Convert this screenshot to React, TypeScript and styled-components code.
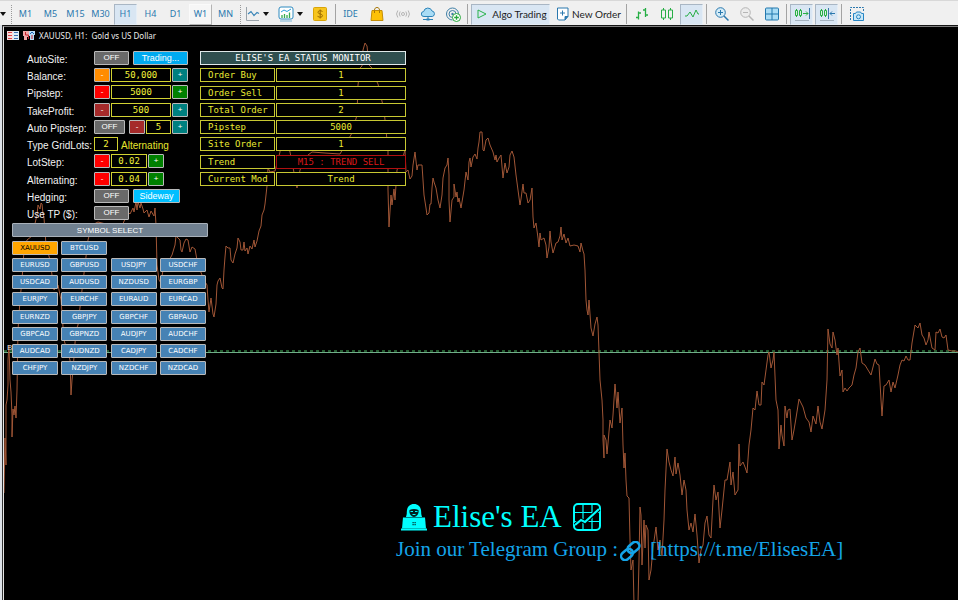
import React from "react";
import styled, { createGlobalStyle, css } from "styled-components";

const GlobalStyle = createGlobalStyle`
  *, *::before, *::after { box-sizing: border-box; }
  body {
    margin: 0;
    background: #000;
    font-family: "Liberation Sans", Arial, sans-serif;
  }
  button, input { font: inherit; margin: 0; padding: 0; }
`;

const ui = `"Noto Sans", "Open Sans", sans-serif`;
const mono = `"DejaVu Sans Mono", "Liberation Mono", monospace`;
const serif = `"Liberation Serif", "Times New Roman", serif`;

const Page = styled.div`
  display: flex;
  flex-direction: column;
  min-height: 100vh;
`;

/* ---------- toolbar ---------- */

const Toolbar = styled.header`
  display: flex;
  align-items: center;
  height: 25px;
  padding-top: 2px;
  background: #f0f0f0;
  border-top: 1px solid #d8d8d8;
  overflow: hidden;
  flex: none;
`;

const Frames = styled.nav`
  display: flex;
  gap: 2px;
  padding-left: 2px;
`;

const ToolButton = styled.button<{ $on?: boolean; $raised?: boolean; $width?: number }>`
  display: flex;
  align-items: center;
  justify-content: center;
  gap: 3px;
  flex: none;
  width: ${(p) => p.$width ?? 23}px;
  height: 21px;
  border: 1px solid transparent;
  background: transparent;
  color: #2a78ae;
  font: 9px/20px ${ui};
  white-space: nowrap;
  ${(p) =>
    p.$on &&
    css`
      background: #d9e6f3;
      border-color: #a9b6c4 #e6eef6 #e6eef6 #a9b6c4;
    `}
  ${(p) =>
    p.$raised &&
    css`
      background: #f6f6f6;
      border-color: #fafafa #b4b4b4 #b4b4b4 #fafafa;
    `}
`;

const CommandButton = styled(ToolButton)`
  color: #1c1c1c;
  font: 10px/20px Lato, ${ui};
`;

const Grip = styled.span<{ $before: number }>`
  flex: none;
  width: 1px;
  height: 19px;
  margin-left: ${(p) => p.$before}px;
  border-left: 1px dotted #9a9a9a;
`;

const Divider = styled.span`
  flex: none;
  width: 1px;
  height: 20px;
  margin: 0 3px;
  background: #a3a3a3;
`;

const Tools = styled.div<{ $gap?: number }>`
  display: flex;
  gap: ${(p) => p.$gap ?? 2}px;
`;

const Caret = styled.span`
  flex: none;
  width: 0;
  height: 0;
  border: 3px solid transparent;
  border-top: 4px solid #111;
  border-bottom: 0;
`;

/* ---------- chart window ---------- */

const Workspace = styled.main`
  display: flex;
  flex: 1;
  padding-left: 2px;
  background: #dde2e8;
`;

const ChartWindow = styled.section`
  flex: 1;
  display: flex;
  border-top: 1px solid #151515;
  border-left: 1px solid #333;
`;

const ChartArea = styled.div`
  position: relative;
  isolation: isolate;
  flex: 1;
  display: flex;
  flex-direction: column;
  min-width: 0;
  background: #000;
  border-top: 1px solid #7d7d7d;
  border-left: 1px solid #e4e4e4;
`;

const Plot = styled.svg`
  position: absolute;
  inset: 0;
  z-index: -1;
  width: 100%;
  height: 100%;
`;

const ChartTitle = styled.h1`
  display: flex;
  align-items: center;
  gap: 4px;
  height: 17px;
  margin: 0;
  padding-left: 3px;
  color: #ececec;
  font: 8px/17px ${ui};
  white-space: pre;
`;

const Panels = styled.div`
  display: flex;
  gap: 12px;
  padding: 7px 0 0 23px;
`;

const Controls = styled.form`
  display: flex;
  flex-direction: column;
  justify-content: space-between;
  width: 161px;
  height: 169px;
`;

const ControlRow = styled.div`
  display: flex;
  height: 14px;
`;

const RowLabel = styled.label`
  flex: none;
  width: 67px;
  color: #f2f2f2;
  font-size: 10px;
  line-height: 17px;
  white-space: nowrap;
`;

const RowFields = styled.div<{ $gap: number }>`
  display: flex;
  gap: ${(p) => p.$gap}px;
`;

const PushButton = styled.button<{ $bg: string; $width: number; $size?: number }>`
  flex: none;
  width: ${(p) => p.$width}px;
  height: 14px;
  border: 1px solid #b9b9b9;
  border-radius: 1px;
  background: ${(p) => p.$bg};
  color: #fff;
  font-size: ${(p) => p.$size ?? 8}px;
  line-height: 12px;
  text-align: center;
`;

const NumberBox = styled.input<{ $width: number }>`
  flex: none;
  width: ${(p) => p.$width}px;
  height: 14px;
  border: 1px solid #d2d232;
  border-radius: 0;
  background: #000;
  color: #f4f43a;
  text-align: center;
  && { font: 9px/12px ${mono}; }
`;

const ModeName = styled.output`
  padding-left: 2px;
  color: #e6e62e;
  font-size: 10px;
  line-height: 17px;
`;

const StatusTable = styled.table`
  display: flex;
  flex-direction: column;
  justify-content: space-between;
  width: 206px;
  height: 135px;
  font: 9px/12px ${mono};

  caption {
    height: 14px;
    border: 1px solid #dfe9e9;
    background: #2f4f4f;
    color: #fff;
  }
  tbody { display: contents; }
`;

const StatusRow = styled.tr`
  display: grid;
  grid-template-columns: 75px 1fr;
  gap: 1px;
  height: 14px;
  color: #eaea33;
`;

const StatusName = styled.th`
  padding: 0 0 0 7px;
  border: 1px solid #c8c832;
  background: #000;
  font-weight: 400;
  text-align: left;
  white-space: nowrap;
`;

const StatusValue = styled.td<{ $alert?: boolean }>`
  padding: 0;
  border: 1px solid ${(p) => (p.$alert ? "#b01010" : "#c8c832")};
  background: #000;
  color: ${(p) => (p.$alert ? "#d81818" : "inherit")};
  text-align: center;
`;

const Symbols = styled.section`
  width: 196px;
  margin: 3px 0 0 8px;
`;

const SymbolsTitle = styled.h2`
  height: 14px;
  margin: 0 0 4px;
  border: 1px solid #a9b1ba;
  border-radius: 1px;
  background: #708090;
  color: #fff;
  font-size: 8px;
  font-weight: 400;
  line-height: 13px;
  text-align: center;
`;

const SymbolRows = styled.div`
  display: flex;
  flex-direction: column;
  justify-content: space-between;
  height: 134px;
`;

const SymbolRow = styled.div`
  display: grid;
  grid-template-columns: repeat(4, 46px);
  justify-content: space-between;
  width: 194px;
`;

const SymbolButton = styled.button<{ $active?: boolean }>`
  height: 14px;
  border: 1px solid #b9b9b9;
  border-radius: 1px;
  background: ${(p) => (p.$active ? "#ffa500" : "#4682b4")};
  color: ${(p) => (p.$active ? "#000" : "#fff")};
  text-align: center;
  && { font: 7px/12px "DejaVu Sans", sans-serif; }
`;

const Banner = styled.footer`
  margin-top: auto;
  padding: 0 0 35px 392px;
  font-family: ${serif};
  white-space: nowrap;
`;

const BannerTitle = styled.h2`
  display: flex;
  align-items: center;
  gap: 5px;
  height: 34px;
  margin: 0;
  padding-left: 4px;
  color: #00ffff;
  font-size: 31px;
  font-weight: 400;
  line-height: 34px;

  svg:last-child { margin-left: 5px; }
`;

const BannerLine = styled.p`
  display: flex;
  align-items: center;
  height: 31px;
  margin: 0;
  color: #14a4e8;
  font-size: 21px;
  line-height: 31px;

  svg { margin: 2px 9px 0 2px; }
  a { color: inherit; text-decoration: none; }
`;

/* ---------- icons ---------- */

const Icon = ({ w = 16, h = 16, children }: { w?: number; h?: number; children: React.ReactNode }) => (
  <svg width={w} height={h} viewBox={`0 0 ${w} ${h}`} fill="none" aria-hidden="true">
    {children}
  </svg>
);

const LineChartIcon = () => (
  <Icon w={15}>
    <path d="M1.5 1v13.5H14" stroke="#9aa3aa" />
    <path d="M3 8l3-2.500 3 4 3-3 2 1" stroke="#3b86b8" strokeWidth="1.200" />
  </Icon>
);
const IndicatorIcon = () => (
  <Icon>
    <rect x="1" y="1" width="14" height="12" rx="2" fill="#fff" stroke="#2e8bc0" />
    <path d="M2 15h12" stroke="#7ab3d6" />
    <path d="M3 6l3-2 3 1.500 4-2.500" stroke="#2a9fd8" />
    <path d="M4 12V9M6.500 12V8M9 12V9M11.500 12V6.500" stroke="#35ab4e" strokeWidth="1.300" />
  </Icon>
);
const DollarIcon = () => (
  <Icon>
    <rect x="1.500" y="1.500" width="13" height="13" rx="1" fill="#f7c51e" stroke="#d9a407" />
    <path d="M10.500 5.500C8.500 4 6 4.700 6 6.300c0 2.200 4.500 1.200 4.500 3.400 0 1.800-3 2-5 .6M8.200 3.500v9" stroke="#9c6c00" />
  </Icon>
);
const BagIcon = () => (
  <Icon>
    <path d="M5.500 6V4.200C5.500 2.500 6.500 1.500 8 1.500s2.500 1 2.500 2.700V6" stroke="#a87808" />
    <path d="M3 4.500h10l1 10H2z" fill="#fdc106" stroke="#c48e07" />
    <path d="M5.500 7V4.500M10.500 7V4.500" stroke="#a87808" />
  </Icon>
);
const SignalIcon = () => (
  <Icon>
    <circle cx="8" cy="8" r="1.500" stroke="#b5b5b5" />
    <path d="M5.200 5.500a4 4 0 000 5M10.800 5.500a4 4 0 010 5M2.800 4.500a6 6 0 000 7M13.200 4.500a6 6 0 010 7" stroke="#b5b5b5" />
  </Icon>
);
const CloudIcon = () => (
  <Icon>
    <path d="M4 10.500a2.500 2.500 0 01-.3-5A4.300 4.300 0 0112 5a2.800 2.800 0 01.3 5.500z" fill="#a9dcf5" stroke="#2c83b8" />
    <path d="M8 10.500v3M3 13.500h10" stroke="#2c83b8" />
    <path d="M6.500 13.500h3" stroke="#2c83b8" strokeWidth="2" />
  </Icon>
);
const TargetIcon = () => (
  <Icon>
    <path d="M13.500 8A6 6 0 107.500 14M11 8a3.500 3.500 0 10-3.500 3.500" stroke="#3f7fa6" />
    <circle cx="7.500" cy="8" r="1.200" fill="#3f7fa6" />
    <circle cx="11.500" cy="11.500" r="4" fill="#fff" stroke="#24a83a" />
    <path d="M11.500 9.200v4.600M9.200 11.500h4.600" stroke="#24a83a" strokeWidth="1.300" />
  </Icon>
);
const PlayIcon = () => (
  <Icon w={15}>
    <path d="M4 4l8 4-8 4z" stroke="#27b34a" />
  </Icon>
);
const NewOrderIcon = () => (
  <Icon w={13}>
    <path d="M2 2h10v8.500L9 14H2.500L1.500 13V2z" fill="#fff" stroke="#2a78ae" />
    <path d="M12 10.500H9V14" fill="#2a78ae" stroke="#2a78ae" />
    <path d="M6.500 4.500v5M4 7h5" stroke="#2a78ae" />
  </Icon>
);
const BarsIcon = () => (
  <Icon>
    <path d="M4.500 5.500v8M2 11.500h2.500M4.500 7H7M11.500 2v9M9 4h2.500M11.500 9H14" stroke="#27ae45" strokeWidth="1.300" />
  </Icon>
);
const CandlesIcon = () => (
  <Icon>
    <path d="M4.500 2v12M11.500 2v12" stroke="#27ae45" />
    <path d="M2.500 4h4v8h-4zM9.500 4h4v8h-4z" fill="#f0f0f0" stroke="#27ae45" />
  </Icon>
);
const WaveIcon = () => (
  <Icon>
    <path d="M1 10h2l3-4 3 5 3-7 2 4h1" stroke="#27ae45" />
  </Icon>
);
const Magnifier = ({ color, fill, plus }: { color: string; fill: string; plus?: boolean }) => (
  <Icon>
    <circle cx="6.500" cy="6.500" r="4.800" fill={fill} stroke={color} />
    <path d="M10 10l4.500 4.500" stroke={color} strokeWidth="1.500" />
    <path d={plus ? "M6.500 4v5M4 6.500h5" : "M4 6.500h5"} stroke={color} />
  </Icon>
);
const TileIcon = () => (
  <Icon>
    <rect x="1.500" y="2" width="13" height="12" rx="1" fill="#aadcf5" stroke="#2378ae" />
    <path d="M8 2v12M1.500 8h13" stroke="#2378ae" />
  </Icon>
);
const ShiftIcon = ({ inward }: { inward?: boolean }) => (
  <Icon w={18}>
    <path d="M3.500 3v8M7.500 3v8" stroke="#27ae45" />
    <path d="M2.500 4.500h2v5h-2zM6.500 4.500h2v5h-2z" fill="#d9f2de" stroke="#27ae45" />
    <path d="M2 14.500h14" stroke="#a5b3c0" />
    {inward ? (
      <>
        <path d="M10.500 2v11" stroke="#3a78a8" />
        <path d="M12 7.500h5M14 5.500l-2 2 2 2" stroke="#2a78ae" />
      </>
    ) : (
      <>
        <path d="M16.500 2v11" stroke="#3a78a8" />
        <path d="M10 7.500h5M13 5.500l2 2-2 2" stroke="#27ae45" />
      </>
    )}
  </Icon>
);
const CameraIcon = () => (
  <Icon>
    <path d="M1.500 14V1.500h13V6" stroke="#2a78ae" strokeDasharray="2 1" />
    <path d="M4.500 7.500h2l1-1.500h4l1 1.500h2v7h-10z" fill="#c9e8f8" stroke="#2585c4" />
    <circle cx="9.500" cy="10.800" r="2" stroke="#2585c4" />
  </Icon>
);
const SheetIcon = () => (
  <Icon w={12} h={9}>
    <path d="M0 0h6v9H0z" fill="#f7dcdc" />
    <path d="M6 0h6v9H6z" fill="#dcebf7" />
    <path d="M1 1.500h4M1 4.500h4M1 7.500h4" stroke="#d8444c" />
    <path d="M7 1.500h4M7 4.500h4M7 7.500h4" stroke="#3a6fb0" />
  </Icon>
);
const TradeIcon = () => (
  <Icon w={12} h={9}>
    <path d="M0 0h6v6H4v3H1V5H0z" fill="#f2a8a8" />
    <path d="M6 0h6v4h-1v5H7V5H6z" fill="#b9dcf5" />
    <path d="M2.500 1v3h3v4M9 8V4" stroke="#c8232c" />
    <path d="M7 3l2-2 2 2" stroke="#1a62b5" />
  </Icon>
);
const HackerIcon = () => (
  <Icon w={28} h={28}>
    <path d="M14 1C9 1 6.500 5 6.800 10c0 2-.8 3-.8 4h16c0-1-.8-2-.8-4C21.500 5 19 1 14 1z" fill="#0ff" />
    <path d="M9.500 7c3-1.500 6-1.500 9 0 .6 4-1.500 6.500-4.500 7-3-.5-5.100-3-4.500-7z" fill="#022" />
    <path d="M10.500 8.500h2.500M15 8.500h2.500M12.500 11.500h3" stroke="#0ff" />
    <path d="M3 14.500h22l1 11H2z" fill="#0ff" />
    <path d="M1 26.500h26" stroke="#0ff" strokeWidth="2" />
    <path d="M12.500 19h1.200v1.200h-1.200zM14.500 19h1.200v1.200h-1.200zM12.500 21h1.200v1.200h-1.200zM14.500 21h1.200v1.200h-1.200z" fill="#033" />
  </Icon>
);
const GrowthIcon = () => (
  <Icon w={30} h={30}>
    <rect x="2" y="2" width="26" height="26" rx="4" stroke="#0ff" strokeWidth="2" />
    <path d="M11 2v26M20 2v26M2 10.500h26M2 19.500h26" stroke="#0ff" strokeWidth="1.200" />
    <path d="M3 23l6-5 4 2L27 7" stroke="#000" strokeWidth="4" />
    <path d="M3 23l6-5 4 2L27 7" stroke="#0ff" strokeWidth="2.200" />
  </Icon>
);
const LinkIcon = () => (
  <Icon w={21} h={20}>
    <g stroke="#14a4e8" strokeWidth="2.500">
      <rect x="7" y="2.500" width="13" height="8" rx="4" transform="rotate(-40 13.500 6.500)" />
      <rect x="0.500" y="9.500" width="13" height="8" rx="4" transform="rotate(-40 7 13.500)" />
    </g>
  </Icon>
);

/* ---------- data ---------- */

const timeframes = ["M1", "M5", "M15", "M30", "H1", "H4", "D1", "W1", "MN"];

const status: [string, string][] = [
  ["Order Buy", "1"],
  ["Order Sell", "1"],
  ["Total Order", "2"],
  ["Pipstep", "5000"],
  ["Site Order", "1"],
  ["Trend", "M15 : TREND SELL"],
  ["Current Mod", "Trend"],
];

const symbols = [
  ["XAUUSD", "BTCUSD"],
  ["EURUSD", "GBPUSD", "USDJPY", "USDCHF"],
  ["USDCAD", "AUDUSD", "NZDUSD", "EURGBP"],
  ["EURJPY", "EURCHF", "EURAUD", "EURCAD"],
  ["EURNZD", "GBPJPY", "GBPCHF", "GBPAUD"],
  ["GBPCAD", "GBPNZD", "AUDJPY", "AUDCHF"],
  ["AUDCAD", "AUDNZD", "CADJPY", "CADCHF"],
  ["CHFJPY", "NZDJPY", "NZDCHF", "NZDCAD"],
];

const prices =
  "4,493 5,438 6,465 6,405 7,400 8,385 8,360 9,345 10,380 11,392 12,415 12,437 13,409 14,415 15,406 16,418 17,390 18,330 20,300 22,280 24,250 27,240 32,236 37,215 38,205 40,209 41,203 42,204 43,214 44,218 46,245 50,260 54,290 58,285 61,300 64,340 70,360 71,395 72,380 73,370 76,330 78,325 82,290 88,240 92,225 98,222 110,225 122,226 128,212 130,214 133,208 134,212 136,202 137,210 138,202 140,208 141,203 143,209 144,213 147,210 149,217 151,211 154,216 155,208 156,225 157,265 159,280 161,283 163,270 168,262 172,255 175,245 176,236 178,238 180,240 181,250 182,252 184,243 186,239 188,240 190,252 192,247 195,249 197,260 200,270 204,280 207,285 208,300 209,312 210,305 211,298 212,306 213,314 214,317 216,304 217,285 218,281 220,278 222,288 223,289 224,270 225,257 226,246 228,248 230,248 231,260 233,263 235,254 237,248 238,238 240,242 241,250 243,250 244,242 245,251 247,248 248,254 250,246 252,249 254,240 255,247 257,241 259,231 261,226 262,215 264,210 265,204 266,195 267,186 268,168 270,172 275,171 280,152 281,140 284,138 286,140 290,152 297,188 300,170 308,155 312,152 325,153 340,154 352,133 357,115 358,85 360,68 362,66 363,50 365,43 367,46 369,65 372,68 376,80 378,84 384,110 388,150 388,190 389,227 391,195 392,205 394,189 395,200 397,170 402,160 405,150 406,172 408,170 410,179 412,176 413,165 415,152 417,170 418,165 422,165 423,180 424,195 426,208 427,215 429,213 430,204 431,204 432,188 433,178 434,182 436,188 438,200 440,208 442,195 443,178 445,168 447,165 448,158 449,175 449,200 450,222 452,200 454,197 454,184 456,197 457,192 458,202 459,198 461,208 463,196 464,190 466,172 468,180 469,162 470,158 471,167 473,157 475,154 477,159 478,148 479,142 480,132 482,132 483,150 484,151 486,140 488,138 490,145 493,152 495,160 496,155 497,162 499,158 501,155 503,178 505,163 507,173 509,167 510,155 512,151 514,157 516,175 518,190 520,205 521,199 523,184 524,193 526,193 528,203 530,200 532,188 533,217 534,228 536,223 538,238 539,247 540,233 541,240 544,238 546,245 547,258 549,247 550,231 551,242 553,253 556,243 558,242 560,236 561,227 562,240 564,234 566,243 568,238 570,246 574,245 578,246 580,252 581,243 583,251 584,254 585,270 586,300 587,310 588,315 589,300 591,328 593,336 595,324 597,317 598,325 599,352 600,380 602,400 603,420 603,440 604,458 604,435 606,440 607,454 608,443 610,420 612,428 613,415 615,384 617,408 618,392 620,423 622,408 623,445 624,468 625,453 626,480 627,496 629,498 630,540 631,570 633,560 634,604 638,604 639,560 640,507 641,515 642,565 644,520 645,548 646,525 648,530 649,580 651,570 653,548 656,527 658,550 660,540 662,556 664,520 665,490 667,449 669,462 671,470 673,476 675,457 676,474 678,463 680,475 682,495 684,480 686,490 687,510 689,530 691,523 693,532 695,514 697,535 699,563 701,550 703,545 705,523 707,516 709,535 711,538 713,500 714,485 716,500 718,492 720,528 722,510 725,480 727,480 730,462 731,485 733,472 735,495 738,490 739,444 740,466 743,462 745,467 747,473 749,445 751,430 753,408 755,410 757,391 759,405 761,405 762,382 764,385 766,370 768,355 769,352 771,368 773,360 774,352 776,400 778,410 779,449 781,425 782,435 784,446 785,406 787,418 788,410 790,409 792,440 794,430 796,418 799,399 803,407 806,418 809,422 811,432 813,416 816,424 818,406 820,422 822,429 825,410 827,380 828,329 830,344 832,348 833,332 835,340 837,355 838,348 840,376 842,370 843,392 845,388 847,391 849,388 852,385 854,375 856,368 858,352 860,348 862,363 865,365 868,370 871,375 875,359 877,364 879,365 881,400 882,416 884,386 886,385 889,380 891,392 893,382 895,388 898,375 900,365 902,360 904,361 906,356 908,360 910,360 912,343 915,325 918,328 920,323 922,335 924,338 926,345 928,340 929,332 932,348 935,350 936,332 938,333 940,329 942,337 944,338 946,335 948,350 952,351 956,351 958,352";

/* ---------- parts ---------- */

const Stepper = ({
  id,
  value,
  width,
  minus,
  plus,
}: {
  id: string;
  value: string;
  width: number;
  minus: string;
  plus: string;
}) => (
  <>
    <PushButton type="button" $bg={minus} $width={16} aria-label="Decrease">-</PushButton>
    <NumberBox id={id} defaultValue={value} $width={width} />
    <PushButton type="button" $bg={plus} $width={16} aria-label="Increase">+</PushButton>
  </>
);

const OffButton = ({ id, width = 35 }: { id: string; width?: number }) => (
  <PushButton id={id} type="button" $bg="#696969" $width={width}>OFF</PushButton>
);

const Row = ({ id, label, gap, children }: { id: string; label: string; gap: number; children: React.ReactNode }) => (
  <ControlRow>
    <RowLabel htmlFor={id}>{label}</RowLabel>
    <RowFields $gap={gap}>{children}</RowFields>
  </ControlRow>
);

const TopBar = () => (
  <Toolbar>
    <Caret />
    <Grip $before={5} />
    <Frames aria-label="Timeframes">
      {timeframes.map((t) => (
        <ToolButton key={t} $on={t === "H1"} $raised={t === "W1"}>{t}</ToolButton>
      ))}
    </Frames>
    <Grip $before={3} />
    <Tools $gap={1}>
      <ToolButton $width={32} aria-label="Chart type"><LineChartIcon /><Caret /></ToolButton>
      <ToolButton $width={32} aria-label="Indicators"><IndicatorIcon /><Caret /></ToolButton>
      <ToolButton $width={25} aria-label="Quotes"><DollarIcon /></ToolButton>
    </Tools>
    <Divider />
    <Tools>
      <ToolButton>IDE</ToolButton>
      <ToolButton $width={25} aria-label="Market"><BagIcon /></ToolButton>
      <ToolButton aria-label="Signals"><SignalIcon /></ToolButton>
      <ToolButton aria-label="Hosting"><CloudIcon /></ToolButton>
      <ToolButton $width={23} aria-label="Add service"><TargetIcon /></ToolButton>
    </Tools>
    <Divider />
    <Tools $gap={4}>
      <CommandButton $on $width={79}><PlayIcon />Algo Trading</CommandButton>
      <CommandButton $width={69}><NewOrderIcon />New Order</CommandButton>
    </Tools>
    <Divider />
    <Tools>
      <ToolButton aria-label="Bars"><BarsIcon /></ToolButton>
      <ToolButton aria-label="Candles"><CandlesIcon /></ToolButton>
      <ToolButton $on aria-label="Line"><WaveIcon /></ToolButton>
    </Tools>
    <Divider />
    <Tools>
      <ToolButton aria-label="Zoom in"><Magnifier color="#2a78ae" fill="#d4ecf8" plus /></ToolButton>
      <ToolButton aria-label="Zoom out"><Magnifier color="#b5b5b5" fill="#ececec" /></ToolButton>
      <ToolButton aria-label="Tile windows"><TileIcon /></ToolButton>
    </Tools>
    <Divider />
    <Tools>
      <ToolButton $on aria-label="Auto scroll"><ShiftIcon /></ToolButton>
      <ToolButton $on aria-label="Chart shift"><ShiftIcon inward /></ToolButton>
    </Tools>
    <Divider />
    <ToolButton aria-label="Screenshot"><CameraIcon /></ToolButton>
  </Toolbar>
);

export default function App() {
  return (
    <Page>
      <GlobalStyle />
      <TopBar />
      <Workspace>
        <ChartWindow>
          <ChartArea>
            <Plot viewBox="4 27 954 573" preserveAspectRatio="none" aria-hidden="true">
              <path d="M4 351H958" stroke="#255c30" strokeWidth="2" strokeDasharray="3 3" />
              <path d="M4 352.500H958" stroke="#6fae88" />
              <polyline points={prices} fill="none" stroke="#a05636" strokeWidth="1" strokeLinejoin="round" />
              <text x="7" y="350" fill="#ddd" fontSize="8" fontFamily="Liberation Sans">B</text>
            </Plot>

            <ChartTitle>
              <SheetIcon />
              <TradeIcon />
              {"XAUUSD, H1:  Gold vs US Dollar"}
            </ChartTitle>

            <Panels>
              <Controls>
                <Row id="autosite" label="AutoSite:" gap={4}>
                  <OffButton id="autosite" />
                  <PushButton type="button" $bg="#00aaf0" $width={55} $size={9}>Trading...</PushButton>
                </Row>
                <Row id="balance" label="Balance:" gap={1}>
                  <Stepper id="balance" value="50,000" width={60} minus="#ff8c00" plus="#008080" />
                </Row>
                <Row id="pipstep" label="Pipstep:" gap={1}>
                  <Stepper id="pipstep" value="5000" width={60} minus="#ff0000" plus="#008000" />
                </Row>
                <Row id="takeprofit" label="TakeProfit:" gap={1}>
                  <Stepper id="takeprofit" value="500" width={60} minus="#a52a2a" plus="#008080" />
                </Row>
                <Row id="autopipstep" label="Auto Pipstep:" gap={4}>
                  <OffButton id="autopipstep" width={31} />
                  <RowFields $gap={1}>
                    <Stepper id="pipcount" value="5" width={25} minus="#a52a2a" plus="#008080" />
                  </RowFields>
                </Row>
                <Row id="gridlots" label="Type GridLots:" gap={1}>
                  <NumberBox id="gridlots" defaultValue="2" $width={24} />
                  <ModeName>Alternating</ModeName>
                </Row>
                <Row id="lotstep" label="LotStep:" gap={1}>
                  <Stepper id="lotstep" value="0.02" width={36} minus="#ff0000" plus="#008000" />
                </Row>
                <Row id="alternating" label="Alternating:" gap={1}>
                  <Stepper id="alternating" value="0.04" width={36} minus="#ff0000" plus="#008000" />
                </Row>
                <Row id="hedging" label="Hedging:" gap={4}>
                  <OffButton id="hedging" />
                  <PushButton type="button" $bg="#00bfff" $width={47} $size={9}>Sideway</PushButton>
                </Row>
                <Row id="usetp" label="Use TP ($):" gap={4}>
                  <OffButton id="usetp" />
                </Row>
              </Controls>

              <StatusTable>
                <caption>ELISE'S EA STATUS MONITOR</caption>
                <tbody>
                  {status.map(([name, value]) => (
                    <StatusRow key={name}>
                      <StatusName scope="row">{name}</StatusName>
                      <StatusValue $alert={name === "Trend"}>{value}</StatusValue>
                    </StatusRow>
                  ))}
                </tbody>
              </StatusTable>
            </Panels>

            <Symbols>
              <SymbolsTitle>SYMBOL SELECT</SymbolsTitle>
              <SymbolRows>
                {symbols.map((row) => (
                  <SymbolRow key={row[0]}>
                    {row.map((s) => (
                      <SymbolButton key={s} type="button" $active={s === "XAUUSD"}>{s}</SymbolButton>
                    ))}
                  </SymbolRow>
                ))}
              </SymbolRows>
            </Symbols>

            <Banner>
              <BannerTitle>
                <HackerIcon />
                Elise's EA
                <GrowthIcon />
              </BannerTitle>
              <BannerLine>
                Join our Telegram Group :
                <LinkIcon />
                <a href="https://t.me/ElisesEA">[https://t.me/ElisesEA]</a>
              </BannerLine>
            </Banner>
          </ChartArea>
        </ChartWindow>
      </Workspace>
    </Page>
  );
}
